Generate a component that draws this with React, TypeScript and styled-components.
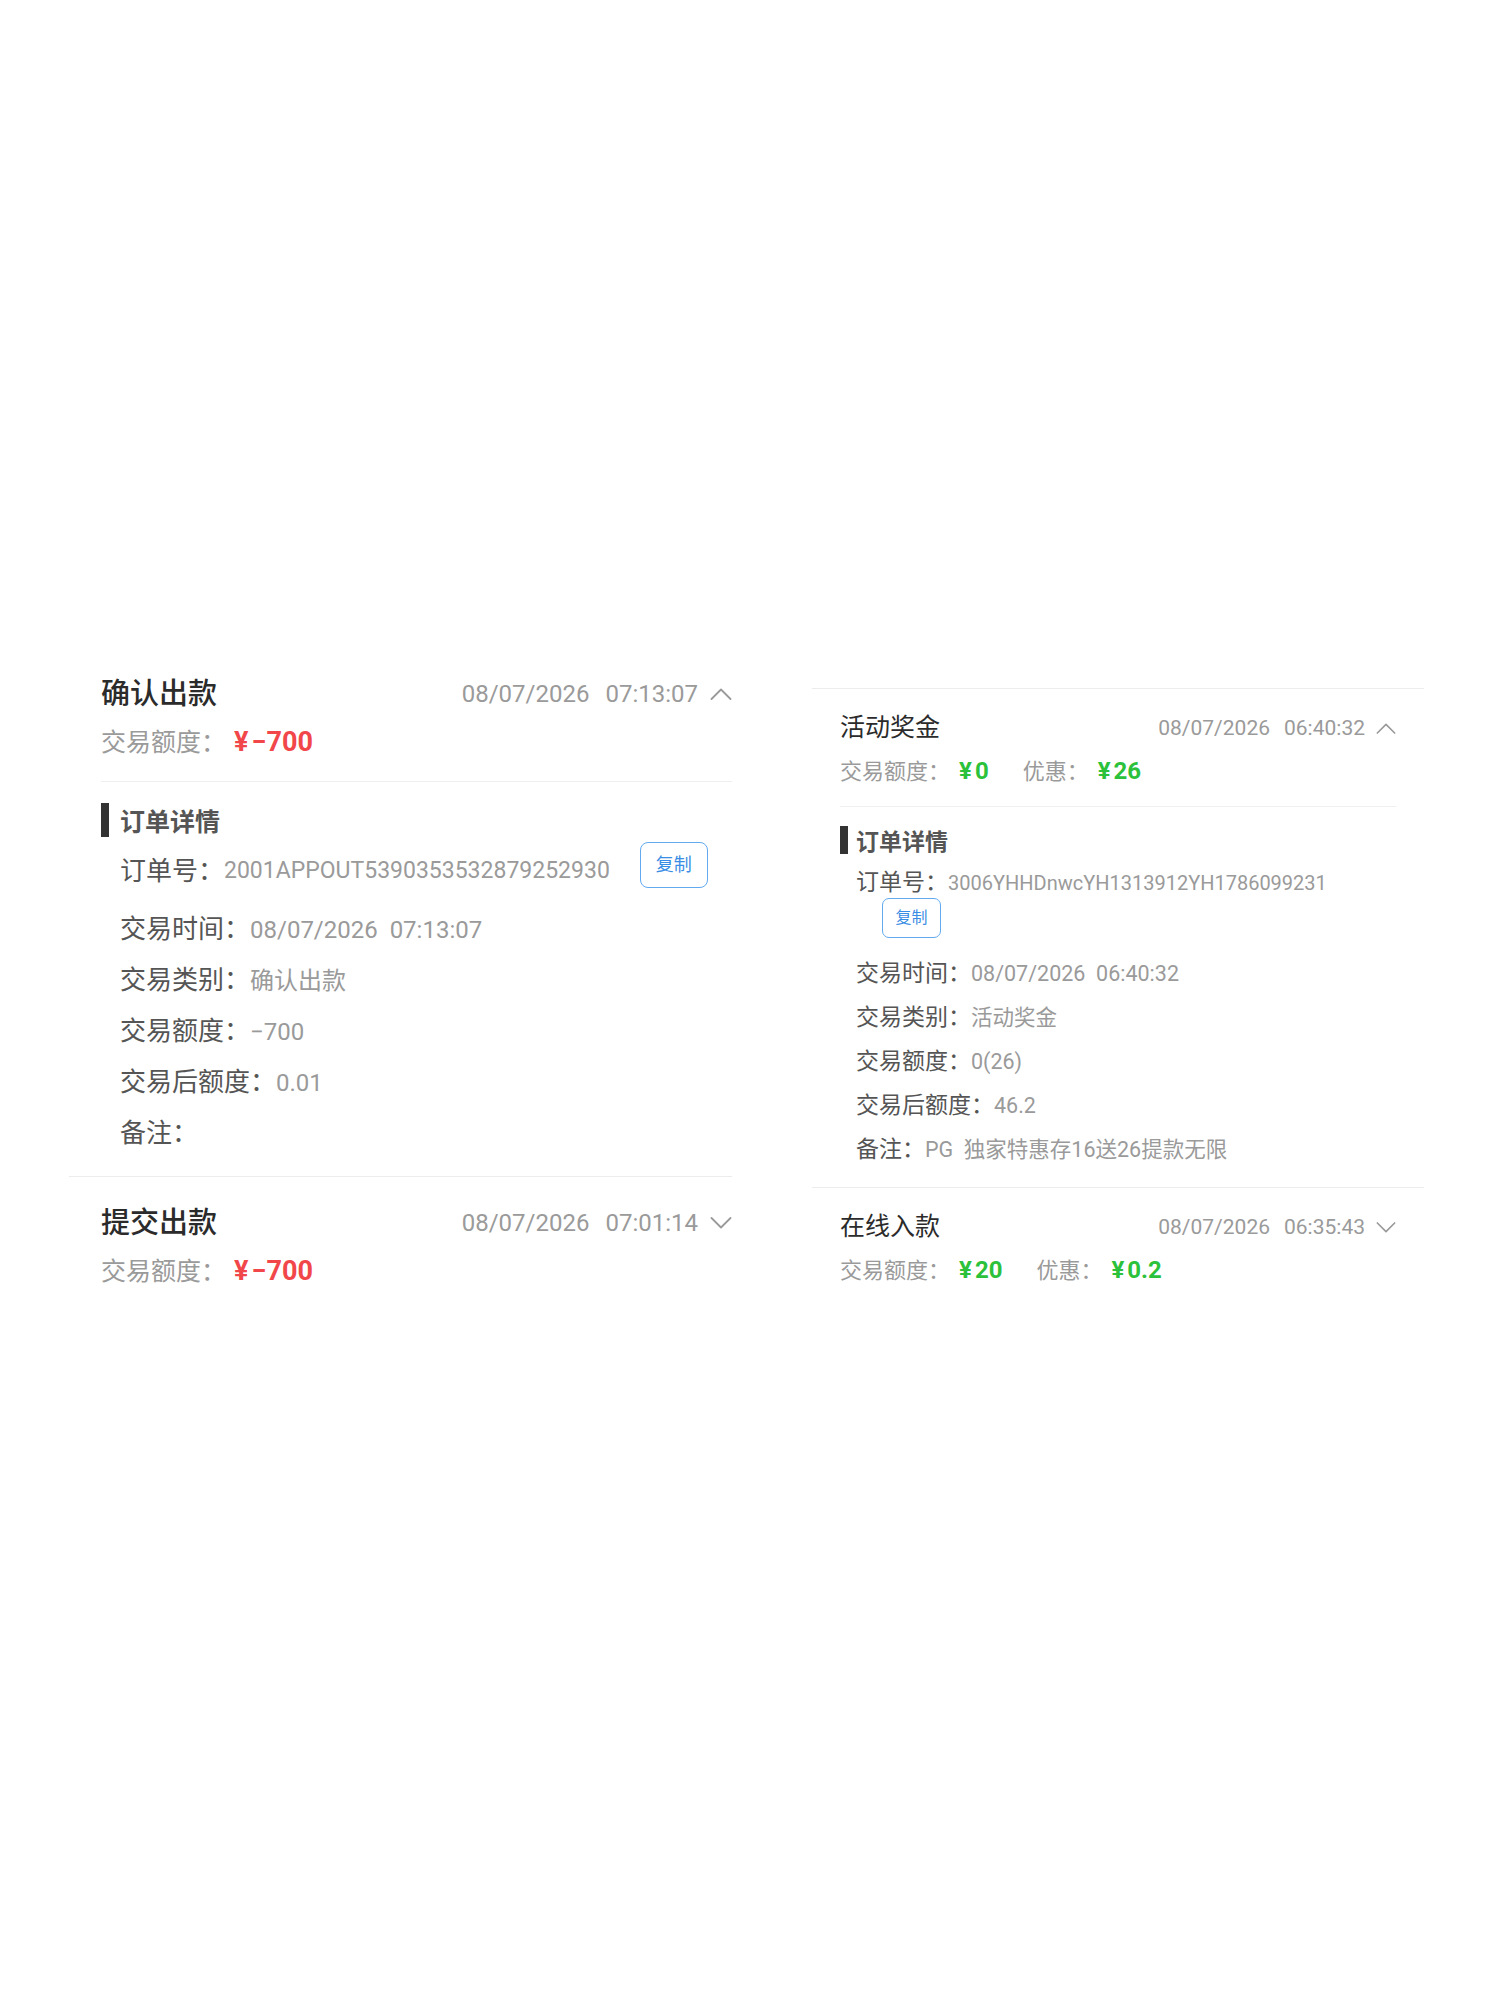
import React, { FC } from 'react';
import styled, { createGlobalStyle, ThemeProvider } from 'styled-components';

const leftScale = {
  padLeft: 32,
  padRight: 0,
  headTop: 26,
  titleSize: 29,
  titleWeight: 500,
  titleLine: 40,
  dateSize: 24,
  dateGap: 16,
  chevronW: 22,
  chevronH: 12,
  chevronGap: 12,
  sumSize: 25,
  sumLine: 36,
  sumTop: 10,
  sumBottom: 21,
  amountSize: 27,
  amountGap: 8,
  pairGap: 34,
  detailTop: 21,
  detailBottom: 17,
  barW: 8,
  barH: 34,
  barGap: 11,
  headingSize: 25,
  indent: 19,
  orderTop: 5,
  orderLine: 34,
  orderShift: 12,
  orderSize: 23,
  labelSize: 26,
  valueSize: 24,
  rowsTop: 16,
  rowLine: 51,
  btnW: 68,
  btnH: 46,
  btnFont: 18,
  btnGap: 30,
  btnRadius: 8,
};

const rightScale = {
  padLeft: 28,
  padRight: 28,
  headTop: 21,
  titleSize: 25,
  titleWeight: 400,
  titleLine: 36,
  dateSize: 21,
  dateGap: 14,
  chevronW: 20,
  chevronH: 11,
  chevronGap: 11,
  sumSize: 22,
  sumLine: 32,
  sumTop: 9,
  sumBottom: 19,
  amountSize: 24,
  amountGap: 9,
  pairGap: 34,
  detailTop: 19,
  detailBottom: 15,
  barW: 8,
  barH: 28,
  barGap: 8,
  headingSize: 23,
  indent: 16,
  orderTop: 14,
  orderLine: 30,
  orderShift: 0,
  orderSize: 20,
  labelSize: 23,
  valueSize: 21.5,
  rowsTop: 14,
  rowLine: 44,
  btnW: 59,
  btnH: 40,
  btnFont: 16,
  btnGap: 26,
  btnRadius: 7,
};

type Scale = typeof leftScale;

const GlobalStyle = createGlobalStyle`
  html, body {
    margin: 0;
    padding: 0;
    background: #ffffff;
  }

  body {
    font-family: Roboto, "Noto Sans CJK SC", sans-serif;
    color: #333333;
  }
`;

/* Styled Components */

const Page = styled.div`
  display: flex;
  align-items: flex-start;
  gap: 80px;
  padding: 648px 0 0 69px;
  min-height: 2000px;
  box-sizing: border-box;
`;

const Column = styled.div<{ $width: number; $offset: number; $topLine?: boolean }>`
  width: ${(p) => p.$width}px;
  margin-top: ${(p) => p.$offset}px;
  border-top: ${(p) => (p.$topLine ? '1px solid #ececec' : 'none')};
`;

const Item = styled.div<{ $last?: boolean }>`
  border-bottom: ${(p) => (p.$last ? 'none' : '1px solid #ececec')};
`;

const Inner = styled.div`
  padding: 0 ${(p) => p.theme.padRight}px 0 ${(p) => p.theme.padLeft}px;
`;

const TopRow = styled.div`
  display: flex;
  justify-content: space-between;
  align-items: center;
  padding-top: ${(p) => p.theme.headTop}px;
  height: ${(p) => p.theme.titleLine}px;
`;

const Title = styled.div`
  font-size: ${(p) => p.theme.titleSize}px;
  font-weight: ${(p) => p.theme.titleWeight};
  color: #2b2b2b;
  line-height: ${(p) => p.theme.titleLine}px;
`;

const Meta = styled.div`
  display: flex;
  align-items: center;
  color: #9a9a9a;
  font-size: ${(p) => p.theme.dateSize}px;
  gap: ${(p) => p.theme.dateGap}px;

  svg {
    margin-left: ${(p) => p.theme.chevronGap - p.theme.dateGap}px;
  }
`;

const Summary = styled.div<{ $open?: boolean }>`
  margin-top: ${(p) => p.theme.sumTop}px;
  padding-bottom: ${(p) => (p.$open ? p.theme.sumBottom : 0)}px;
  line-height: ${(p) => p.theme.sumLine}px;
  height: ${(p) => p.theme.sumLine}px;
  border-bottom: ${(p) => (p.$open ? '1px solid #efefef' : 'none')};
  display: flex;
  align-items: baseline;
`;

const SumLabel = styled.span<{ $spaced?: boolean }>`
  font-size: ${(p) => p.theme.sumSize}px;
  color: #9a9a9a;
  margin-left: ${(p) => (p.$spaced ? p.theme.pairGap : 0)}px;
`;

const Amount = styled.span<{ $tone: 'red' | 'green' }>`
  font-size: ${(p) => p.theme.amountSize}px;
  font-weight: 700;
  color: ${(p) => (p.$tone === 'red' ? '#f2474a' : '#2cc13a')};
  margin-left: ${(p) => p.theme.amountGap}px;

  .yen {
    margin-right: 3px;
  }
`;

const Detail = styled.div`
  padding: ${(p) => p.theme.detailTop}px 0 ${(p) => p.theme.detailBottom}px;
`;

const Heading = styled.div`
  display: flex;
  align-items: center;
  height: ${(p) => p.theme.barH}px;
  font-size: ${(p) => p.theme.headingSize}px;
  font-weight: 700;
  color: #555555;

  &::before {
    content: '';
    width: ${(p) => p.theme.barW}px;
    height: ${(p) => p.theme.barH}px;
    background: #333333;
    margin-right: ${(p) => p.theme.barGap}px;
  }
`;

const DetailList = styled.div`
  padding-left: ${(p) => p.theme.indent}px;
`;

const OrderRow = styled.div`
  display: flex;
  flex-wrap: wrap;
  align-items: center;
  margin-top: ${(p) => p.theme.orderTop}px;
  margin-bottom: ${(p) => p.theme.rowsTop}px;
  line-height: ${(p) => p.theme.orderLine}px;

  > span {
    padding-top: ${(p) => p.theme.orderShift}px;
  }
`;

const OrderValue = styled.span`
  font-size: ${(p) => p.theme.orderSize}px;
  color: #9a9a9a;
`;

const Row = styled.div`
  height: ${(p) => p.theme.rowLine}px;
  line-height: ${(p) => p.theme.rowLine}px;
  white-space: pre;
`;

const Label = styled.span`
  font-size: ${(p) => p.theme.labelSize}px;
  color: #555555;
`;

const Value = styled.span`
  font-size: ${(p) => p.theme.valueSize}px;
  color: #9a9a9a;
`;

const CopyButton = styled.button`
  display: inline-flex;
  align-items: center;
  justify-content: center;
  box-sizing: border-box;
  width: ${(p) => p.theme.btnW}px;
  height: ${(p) => p.theme.btnH}px;
  margin-left: ${(p) => p.theme.btnGap}px;
  padding: 0;
  border: 1.5px solid #62a9f0;
  border-radius: ${(p) => p.theme.btnRadius}px;
  background: #ffffff;
  color: #3a8de4;
  font-family: inherit;
  font-size: ${(p) => p.theme.btnFont}px;
  line-height: 1;
`;

/* Chevron */

const ChevronSvg = styled.svg`
  width: ${(p) => p.theme.chevronW}px;
  height: ${(p) => p.theme.chevronH}px;
  flex: none;
`;

const Chevron: FC<{ up: boolean }> = ({ up }) => (
  <ChevronSvg viewBox="0 0 22 12" fill="none">
    <polyline
      points={up ? '1.5,11 11,1.5 20.5,11' : '1.5,1 11,10.5 20.5,1'}
      stroke="#9a9a9a"
      strokeWidth="1.8"
      strokeLinecap="round"
      strokeLinejoin="round"
    />
  </ChevronSvg>
);

/* Data */

interface Pair {
  label: string;
  value: string;
  tone: 'red' | 'green';
}

interface DetailData {
  order: string;
  rows: { label: string; value: string }[];
}

interface TxRecord {
  title: string;
  date: string;
  time: string;
  amounts: Pair[];
  detail?: DetailData;
}

const leftRecords: TxRecord[] = [
  {
    title: '确认出款',
    date: '08/07/2026',
    time: '07:13:07',
    amounts: [{ label: '交易额度：', value: '−700', tone: 'red' }],
    detail: {
      order: '2001APPOUT5390353532879252930',
      rows: [
        { label: '交易时间：', value: '08/07/2026  07:13:07' },
        { label: '交易类别：', value: '确认出款' },
        { label: '交易额度：', value: '−700' },
        { label: '交易后额度：', value: '0.01' },
        { label: '备注：', value: '' },
      ],
    },
  },
  {
    title: '提交出款',
    date: '08/07/2026',
    time: '07:01:14',
    amounts: [{ label: '交易额度：', value: '−700', tone: 'red' }],
  },
];

const rightRecords: TxRecord[] = [
  {
    title: '活动奖金',
    date: '08/07/2026',
    time: '06:40:32',
    amounts: [
      { label: '交易额度：', value: '0', tone: 'green' },
      { label: '优惠：', value: '26', tone: 'green' },
    ],
    detail: {
      order: '3006YHHDnwcYH1313912YH1786099231',
      rows: [
        { label: '交易时间：', value: '08/07/2026  06:40:32' },
        { label: '交易类别：', value: '活动奖金' },
        { label: '交易额度：', value: '0(26)' },
        { label: '交易后额度：', value: '46.2' },
        { label: '备注：', value: 'PG  独家特惠存16送26提款无限' },
      ],
    },
  },
  {
    title: '在线入款',
    date: '08/07/2026',
    time: '06:35:43',
    amounts: [
      { label: '交易额度：', value: '20', tone: 'green' },
      { label: '优惠：', value: '0.2', tone: 'green' },
    ],
  },
];

/* RecordItem Component */

const RecordItem: FC<{ record: TxRecord; last: boolean }> = ({ record, last }) => {
  const open = !!record.detail;
  return (
    <Item $last={last}>
      <Inner>
        <TopRow>
          <Title>{record.title}</Title>
          <Meta>
            <span>{record.date}</span>
            <span>{record.time}</span>
            <Chevron up={open} />
          </Meta>
        </TopRow>
        <Summary $open={open}>
          {record.amounts.map((a, i) => (
            <React.Fragment key={a.label}>
              <SumLabel $spaced={i > 0}>{a.label}</SumLabel>
              <Amount $tone={a.tone}>
                <span className="yen">¥</span>
                {a.value}
              </Amount>
            </React.Fragment>
          ))}
        </Summary>
        {record.detail && (
          <Detail>
            <Heading>订单详情</Heading>
            <DetailList>
              <OrderRow>
                <Label>订单号：</Label>
                <OrderValue>{record.detail.order}</OrderValue>
                <CopyButton type="button">复制</CopyButton>
              </OrderRow>
              {record.detail.rows.map((r) => (
                <Row key={r.label}>
                  <Label>{r.label}</Label>
                  <Value>{r.value}</Value>
                </Row>
              ))}
            </DetailList>
          </Detail>
        )}
      </Inner>
    </Item>
  );
};

const RecordList: FC<{ records: TxRecord[]; scale: Scale }> = ({ records, scale }) => (
  <ThemeProvider theme={scale}>
    {records.map((r, i) => (
      <RecordItem key={r.title} record={r} last={i === records.length - 1} />
    ))}
  </ThemeProvider>
);

const App: FC = () => (
  <>
    <GlobalStyle />
    <Page>
      <Column $width={663} $offset={0}>
        <RecordList records={leftRecords} scale={leftScale} />
      </Column>
      <Column $width={612} $offset={40} $topLine>
        <RecordList records={rightRecords} scale={rightScale} />
      </Column>
    </Page>
  </>
);

export default App;
